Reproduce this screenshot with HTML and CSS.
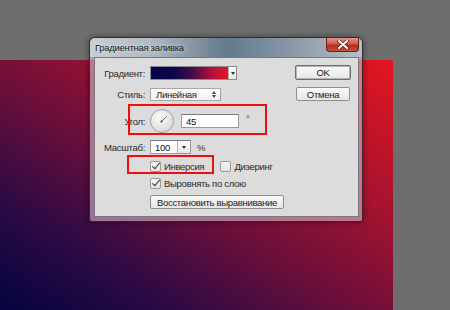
FILE: index.html
```html
<!DOCTYPE html>
<html lang="ru">
<head>
  <meta charset="UTF-8" />
  <title>Градиентная заливка</title>
  <link rel="stylesheet" href="styles.css">
</head>
<body>
  <div class="canvas"></div>

  <div class="dialog">
    <div class="titlebar">
      <span class="title">Градиентная заливка</span>
      <span class="close">
        <svg width="12" height="9" viewBox="0 0 12 9">
          <path d="M2 1 L10 8 M10 1 L2 8" stroke="#5a1a14" stroke-width="3.4" stroke-linecap="round"/>
          <path d="M2 1 L10 8 M10 1 L2 8" stroke="#fff" stroke-width="2" stroke-linecap="round"/>
        </svg>
      </span>
    </div>

    <div class="panel">
      <div class="form">
        <div class="row">
          <label class="lbl">Градиент:</label>
          <div class="swatch">
            <div class="swatch-fill"></div>
            <div class="drop"><span class="tri"></span></div>
          </div>
        </div>

        <div class="row row-style">
          <label class="lbl">Стиль:</label>
          <div class="select">
            <span>Линейная</span>
            <span class="updown"><i class="up"></i><i class="down"></i></span>
          </div>
        </div>

        <div class="row row-angle">
          <label class="lbl">Угол:</label>
          <svg class="dial" width="24" height="24" viewBox="0 0 24 24">
            <defs>
              <radialGradient id="dialbg" cx="40%" cy="35%" r="70%">
                <stop offset="0" stop-color="#fbfbfb"/>
                <stop offset="1" stop-color="#d8d8d8"/>
              </radialGradient>
            </defs>
            <circle cx="12" cy="12" r="11.5" fill="url(#dialbg)" stroke="#a0a0a0"/>
            <line x1="11.5" y1="12.5" x2="17" y2="7" stroke="#666" stroke-width="0.9"/>
            <circle cx="11.5" cy="12.5" r="1.1" fill="#444"/>
          </svg>
          <div class="field field-angle">45</div>
          <span class="unit unit-deg">°</span>
        </div>

        <div class="row row-scale">
          <label class="lbl">Масштаб:</label>
          <div class="field field-scale">
            <span class="val">100</span>
            <span class="drop drop-scale"><span class="tri"></span></span>
          </div>
          <span class="unit">%</span>
        </div>

        <div class="row row-check">
          <span class="check on"></span><span class="ctext">Инверсия</span>
          <span class="check check-dither"></span><span class="ctext">Дизеринг</span>
        </div>

        <div class="row row-check row-align">
          <span class="check on"></span><span class="ctext">Выровнять по слою</span>
        </div>

        <div class="row row-reset">
          <button class="btn btn-reset">Восстановить выравнивание</button>
        </div>
      </div>

      <div class="actions">
        <button class="btn btn-ok">OK</button>
        <button class="btn btn-cancel">Отмена</button>
      </div>

      <div class="mark mark-angle"></div>
      <div class="mark mark-inv"></div>
    </div>
  </div>
</body>
</html>
```

FILE: styles.css
```css
body {
  margin: 0;
  width: 450px;
  height: 310px;
  overflow: hidden;
  background-color: #6e6e6e;
  font-family: 'Liberation Sans', Arial, sans-serif;
  font-size: 9.5px;
  letter-spacing: -0.3px;
  color: #222;
  position: relative;
}
.canvas {
  margin-top: 60px;
  width: 393px;
  height: 250px;
  background: linear-gradient(to top right, #04043f 0%, #2c0a44 22%, #6a0f3a 45%, #a8132f 70%, #e3161f 100%);
}
.dialog {
  position: absolute;
  left: 89px;
  top: 37px;
  width: 274px;
  height: 185px;
  box-sizing: border-box;
  padding: 0 3px 4px 4px;
  border: 1px solid rgba(30, 25, 35, 0.85);
  border-radius: 6px 6px 3px 3px;
  background: rgba(225, 200, 215, 0.55);
  box-shadow: 0 0 6px rgba(0, 0, 0, 0.45);
}
.titlebar {
  position: relative;
  height: 19px;
  margin: 0 -3px 0 -4px;
  padding-left: 5px;
  display: flex;
  align-items: center;
  border-radius: 5px 5px 0 0;
  background: linear-gradient(to right, #c9cfd5 0%, #b0bac3 22%, #65798a 50%, #8a99a7 75%, #b8c0c8 100%);
}
.title {
  color: #1a1a1a;
  text-shadow: 0 0 4px rgba(255, 255, 255, 0.8);
}
.close {
  position: absolute;
  top: 0;
  right: 3px;
  width: 33px;
  height: 14px;
  box-sizing: border-box;
  border: 1px solid #6b2119;
  border-top: none;
  border-radius: 0 0 4px 4px;
  background: linear-gradient(to bottom, #e3958b 0%, #d0594b 45%, #b52c1c 55%, #c9503c 100%);
  display: flex;
  align-items: center;
  justify-content: center;
}
.panel {
  position: relative;
  width: 265px;
  height: 160px;
  box-sizing: border-box;
  border: 1px solid #7b7680;
  background: #dcdcdc;
  display: flex;
}
.form {
  flex: 1;
  padding-top: 8px;
}
.row {
  display: flex;
  align-items: center;
  height: 14px;
  white-space: nowrap;
}
.lbl {
  width: 50px;
  margin-right: 5px;
  text-align: right;
  color: #2a2a2a;
}
.swatch {
  display: flex;
  width: 87px;
  height: 14px;
  box-sizing: border-box;
  border: 1px solid #8c8c8c;
  background: #fff;
}
.swatch-fill {
  width: 77px;
  background: linear-gradient(to right, #05054a 0%, #0c0849 30%, #4a0c45 55%, #b8123a 80%, #e2172a 100%);
}
.drop {
  flex: 1;
  display: flex;
  align-items: center;
  justify-content: center;
  border-left: 1px solid #b0b0b0;
  background: linear-gradient(#fdfdfd, #e8e8e8);
}
.tri {
  width: 0;
  height: 0;
  border-left: 2px solid transparent;
  border-right: 2px solid transparent;
  border-top: 3px solid #333;
}
.row-style {
  margin-top: 8px;
  height: 13px;
}
.select {
  width: 71px;
  height: 13px;
  box-sizing: border-box;
  border: 1px solid #a8a8a8;
  background: linear-gradient(#ffffff, #f0f0f0);
  display: flex;
  align-items: center;
  justify-content: space-between;
  padding: 0 4px 0 5px;
}
.updown {
  display: flex;
  flex-direction: column;
  gap: 1px;
}
.updown i {
  width: 0;
  height: 0;
  border-left: 2px solid transparent;
  border-right: 2px solid transparent;
}
.updown .up { border-bottom: 3px solid #444; }
.updown .down { border-top: 3px solid #444; }
.row-angle {
  margin-top: 8px;
  height: 24px;
}
.dial {
  display: block;
}
.field {
  height: 14px;
  box-sizing: border-box;
  border: 1px solid #9a9a9a;
  border-top-color: #7a7a7a;
  background: #fff;
  display: flex;
  align-items: center;
  padding-left: 4px;
  color: #111;
}
.field-angle {
  width: 58px;
  margin-left: 7px;
}
.unit {
  margin-left: 6px;
  color: #333;
}
.unit-deg {
  margin-left: 7px;
  padding-bottom: 5px;
}
.row-scale {
  margin-top: 7px;
}
.field-scale {
  width: 41px;
  padding-left: 0;
}
.field-scale .val {
  width: 26px;
  padding-left: 4px;
  box-sizing: border-box;
}
.drop-scale {
  height: 100%;
}
.row-check {
  margin-top: 7px;
  height: 11px;
  padding-left: 55px;
}
.row-align {
  margin-top: 6px;
}
.check {
  width: 11px;
  height: 11px;
  box-sizing: border-box;
  border: 1px solid #9a9a9a;
  border-radius: 2px;
  background: linear-gradient(#f6f6f6, #e4e4e4);
  position: relative;
}
.check.on::after {
  content: "";
  position: absolute;
  left: 3px;
  top: -1px;
  width: 3px;
  height: 7px;
  border-right: 1.5px solid #333;
  border-bottom: 1.5px solid #333;
  transform: rotate(40deg);
}
.ctext {
  margin-left: 3px;
  color: #2a2a2a;
}
.check-dither {
  margin-left: 16px;
}
.row-reset {
  margin-top: 6px;
  padding-left: 55px;
}
.btn {
  font-family: inherit;
  font-size: 9.5px;
  letter-spacing: -0.3px;
  color: #222;
  padding: 0;
  white-space: nowrap;
  box-sizing: border-box;
  border: 1px solid #8e8e8e;
  border-radius: 2px;
  background: linear-gradient(#fafafa, #e6e6e6);
}
.btn-reset {
  width: 134px;
  height: 14px;
}
.actions {
  width: 56px;
  margin-right: 7px;
  padding-top: 7px;
  display: flex;
  flex-direction: column;
  align-items: center;
}
.btn-ok {
  width: 56px;
  height: 15px;
  border-color: #6e6e6e;
  box-shadow: inset 0 0 0 1px #b4b4b4;
}
.btn-cancel {
  width: 54px;
  height: 14px;
  margin-top: 7px;
}
.mark {
  position: absolute;
  box-sizing: border-box;
  border: 2px solid #f20d0d;
}
.mark-angle {
  left: 33px;
  top: 46px;
  width: 139px;
  height: 31px;
}
.mark-inv {
  left: 32px;
  top: 97px;
  width: 87px;
  height: 19px;
}
```
